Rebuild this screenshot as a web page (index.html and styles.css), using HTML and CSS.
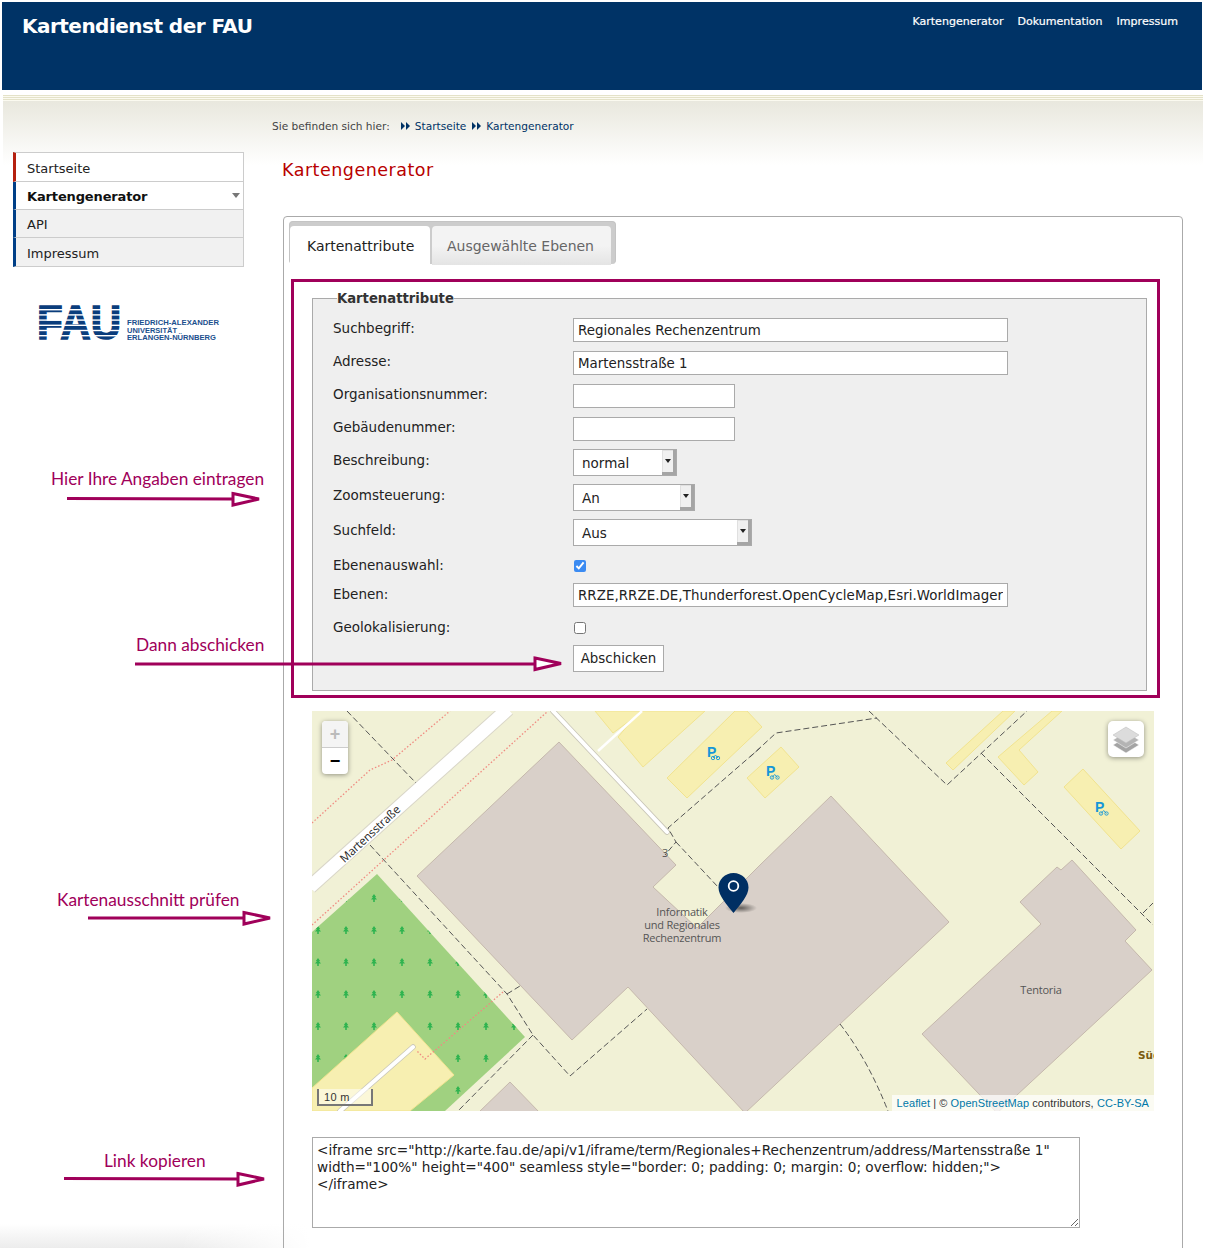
FILE: index.html
```html
<!DOCTYPE html>
<html lang="de">
<head>
<meta charset="utf-8">
<title>Kartendienst der FAU</title>
<link rel="stylesheet" href="styles.css">
</head>
<body>
<div class="page">
  <header class="site-header">
    <div class="site-title">Kartendienst der FAU</div>
    <nav class="top-nav">
      <a>Kartengenerator</a>
      <a>Dokumentation</a>
      <a>Impressum</a>
    </nav>
  </header>
  <div class="layout">
    <aside class="sidebar">
      <ul class="side-menu">
        <li class="item item-home">Startseite</li>
        <li class="item item-active">Kartengenerator<span class="caret"></span></li>
        <li class="item item-plain">API</li>
        <li class="item item-plain item-last">Impressum</li>
      </ul>
      <svg class="fau-logo" width="200" height="42" viewBox="-2 0 200 42">
        <text class="fau-big" transform="scale(1 1.16)" x="-1" y="30.200">FAU</text>
        <g class="fau-stripes">
          <rect x="-2" y="5" width="90" height="1.4"/>
          <rect x="-2" y="10.200" width="90" height="1.4"/>
          <rect x="-2" y="15.400" width="90" height="1.4"/>
          <rect x="-2" y="20.600" width="90" height="1.4"/>
          <rect x="-2" y="25.800" width="90" height="1.4"/>
          <rect x="-2" y="31" width="90" height="1.4"/>
        </g>
        <text class="fau-small" x="89" y="21" textLength="92" lengthAdjust="spacingAndGlyphs">FRIEDRICH-ALEXANDER</text>
        <text class="fau-small" x="89" y="28.500" textLength="50" lengthAdjust="spacingAndGlyphs">UNIVERSITÄT</text>
        <text class="fau-small" x="89" y="36" textLength="89" lengthAdjust="spacingAndGlyphs">ERLANGEN-NÜRNBERG</text>
      </svg>
    </aside>
    <main class="main">
      <div class="breadcrumb">
        <span class="crumb-label">Sie befinden sich hier:</span>
        <svg class="crumb-icon" width="9" height="8" viewBox="0 0 9 8"><path d="M0 0l4 4-4 4zM5 0l4 4-4 4z"/></svg>
        <a>Startseite</a>
        <svg class="crumb-icon" width="9" height="8" viewBox="0 0 9 8"><path d="M0 0l4 4-4 4zM5 0l4 4-4 4z"/></svg>
        <a>Kartengenerator</a>
      </div>
      <h1 class="page-title">Kartengenerator</h1>
      <section class="panel">
        <div class="tabs">
          <div class="tab tab-active">Kartenattribute</div>
          <div class="tab">Ausgewählte Ebenen</div>
        </div>
        <div class="frame">
          <form class="fieldset-form">
            <fieldset class="attrs">
              <legend>Kartenattribute</legend>
              <div class="grid">
                <label>Suchbegriff:</label>
                <input class="field wide" type="text" value="Regionales Rechenzentrum">
                <label>Adresse:</label>
                <input class="field wide" type="text" value="Martensstraße 1">
                <label>Organisationsnummer:</label>
                <input class="field short" type="text">
                <label>Gebäudenummer:</label>
                <input class="field short" type="text">
                <label>Beschreibung:</label>
                <div class="select sel-a"><span class="sel-text">normal</span><span class="sel-btn"></span></div>
                <label>Zoomsteuerung:</label>
                <div class="select sel-b"><span class="sel-text">An</span><span class="sel-btn"></span></div>
                <label>Suchfeld:</label>
                <div class="select sel-c"><span class="sel-text">Aus</span><span class="sel-btn"></span></div>
                <label>Ebenenauswahl:</label>
                <input class="check" type="checkbox" checked>
                <label>Ebenen:</label>
                <input class="field wide layers" type="text" value="RRZE,RRZE.DE,Thunderforest.OpenCycleMap,Esri.WorldImagery">
                <label>Geolokalisierung:</label>
                <input class="check" type="checkbox">
                <span></span>
                <button class="submit" type="button">Abschicken</button>
              </div>
            </fieldset>
          </form>
        </div>
        <div class="map">
          <svg class="map-svg" width="842" height="400" viewBox="312 711 842 400">
            <defs>
              <pattern id="trees" patternUnits="userSpaceOnUse" x="304" y="882" width="28" height="32">
                <path class="tree" d="M14 12l2.2 3h-1.2l2 2.6h-2.2v2.4h-1.6v-2.4h-2.2l2-2.6h-1.2z"/>
              </pattern>
              <radialGradient id="shadow">
                <stop offset="0" stop-color="#000" stop-opacity=".55"/>
                <stop offset="1" stop-color="#000" stop-opacity="0"/>
              </radialGradient>
            </defs>
            <rect class="land" x="312" y="711" width="842" height="400"/>
            <polygon class="green" points="312,932 377,874 525,1037 445,1111 312,1111"/>
            <polygon class="trees" points="312,932 377,874 525,1037 445,1111 312,1111"/>
            <polygon class="park" points="397,1012 454,1075 410,1111 312,1111 312,1088"/>
            <polygon class="park" points="595,711 643,711 613,733"/>
            <polygon class="park" points="640,711 705,711 643,767 618,737"/>
            <polygon class="park" points="667,778 687,798 762,727 747,711 735,711"/>
            <polygon class="park" points="781,747 799,767 765,798 747,778"/>
            <polygon class="park" points="1003,711 1015,711 953,770 946,763"/>
            <polygon class="park" points="1052,711 1062,711 1019,750 1038,772 1024,785 998,757"/>
            <polygon class="park" points="1083,769 1140,831 1121,849 1064,787"/>
            <polygon class="building" points="559,742 676,865 653,887 697,928 760,865 831,796 949,922 745,1113 628,987 572,1040 417,876"/>
            <polygon class="building" points="1072,860 1136,930 1125,941 1152,970 1017,1095 997,1113 922,1034 1041,924 1020,902 1057,867 1061,870"/>
            <polygon class="building" points="510,1082 540,1113 478,1113"/>
            <line class="road-edge" x1="508" y1="709" x2="310" y2="887"/>
            <line class="road" x1="508" y1="709" x2="310" y2="887"/>
            <line class="lane-edge" x1="553" y1="711" x2="667" y2="832"/>
            <line class="lane" x1="553" y1="711" x2="667" y2="832"/>
            <line class="lane-thin" x1="642" y1="711" x2="598" y2="751"/>
            <line class="lane-edge" x1="413" y1="1047" x2="340" y2="1111"/>
            <line class="lane" x1="413" y1="1047" x2="340" y2="1111"/>
            <polyline class="footway" points="312,823 370,770 392,760 450,711"/>
            <line class="footway" x1="312" y1="925" x2="548" y2="711"/>
            <polyline class="footway" points="503,992 425,1059 416,1050"/>
            <polyline class="fence" points="347,711 416,783"/>
            <polyline class="fence" points="370,845 507,994 533,1035 570,1076 647,1009"/>
            <line class="fence" x1="507" y1="994" x2="520" y2="986"/>
            <line class="fence" x1="533" y1="1035" x2="458" y2="1111"/>
            <polyline class="fence" points="760,748 668,828 676,842 665,855"/>
            <line class="fence" x1="676" y1="842" x2="718" y2="887"/>
            <polyline class="fence" points="750,757 776,733 877,718"/>
            <polyline class="fence" points="869,711 947,785 1027,711"/>
            <line class="fence" x1="981" y1="753" x2="1153" y2="925"/>
            <line class="fence" x1="1143" y1="913" x2="1153" y2="903"/>
            <path class="fence" d="M840 1024Q868 1060 888 1111"/>
            <g class="bike">
              <text class="bike-p" x="707" y="757">P</text>
              <circle cx="713" cy="758" r="1.700"/><circle cx="718" cy="758" r="1.700"/>
              <path d="M713 758l2.500-3 2.500 3"/>
              <text class="bike-p" x="766" y="776">P</text>
              <circle cx="772" cy="777.500" r="1.700"/><circle cx="777.500" cy="777.500" r="1.700"/>
              <path d="M772 777.500l2.700-3 2.800 3"/>
              <text class="bike-p" x="1095" y="812">P</text>
              <circle cx="1101" cy="813.500" r="1.700"/><circle cx="1106.500" cy="813.500" r="1.700"/>
              <path d="M1101 813.500l2.700-3 2.800 3"/>
            </g>
            <text class="map-label" x="665" y="857">3</text>
            <text class="map-label" x="682" y="916">Informatik</text>
            <text class="map-label" x="682" y="929">und Regionales</text>
            <text class="map-label" x="682" y="942">Rechenzentrum</text>
            <text class="map-label" x="1041" y="994">Tentoria</text>
            <text class="map-suburb" x="1138" y="1059">Süd</text>
            <text class="street" transform="translate(370 834) rotate(-43)" x="0" y="4">Martensstraße</text>
            <ellipse cx="741" cy="908" rx="16" ry="5" fill="url(#shadow)"/>
            <path class="pin" d="M733.500 873c8.500 0 15 6.500 15 14.500 0 8-8 17-15 25.500-7-8.500-15-17.500-15-25.500 0-8 6.500-14.500 15-14.500z"/>
            <circle class="pin-ring" cx="733.500" cy="886" r="4.800"/>
          </svg>
          <div class="zoom-ctl">
            <div class="zoom-btn zoom-off">+</div>
            <div class="zoom-btn">&#8722;</div>
          </div>
          <div class="layer-ctl">
            <svg width="30" height="30" viewBox="0 0 30 30">
              <path class="lay3" d="M15 13l13 8-13 8-13-8z"/>
              <path class="lay2" d="M15 8l13 8-13 8-13-8z"/>
              <path class="lay1" d="M15 3l13 8-13 8-13-8z"/>
            </svg>
          </div>
          <div class="scale">10 m</div>
          <div class="attrib"><a>Leaflet</a> | © <a>OpenStreetMap</a> contributors, <a>CC-BY-SA</a></div>
        </div>
        <div class="code-wrap">
          <textarea class="code" spellcheck="false">&lt;iframe src="http://karte.fau.de/api/v1/iframe/term/Regionales+Rechenzentrum/address/Martensstraße 1" width="100%" height="400" seamless style="border: 0; padding: 0; margin: 0; overflow: hidden;"&gt;
&lt;/iframe&gt;</textarea>
        </div>
      </section>
    </main>
  </div>
  <svg class="notes" width="1209" height="1248" viewBox="0 0 1209 1248">
    <text class="note" x="51" y="485">Hier Ihre Angaben eintragen</text>
    <line class="note-line" x1="67" y1="498.500" x2="234" y2="499"/>
    <path class="note-head" d="M233 493.500l26 5.500-26 6z"/>
    <text class="note" x="136" y="651">Dann abschicken</text>
    <line class="note-line" x1="135" y1="664" x2="536" y2="664"/>
    <path class="note-head" d="M535 658l26 5.500-26 6z"/>
    <text class="note" x="57" y="906">Kartenausschnitt prüfen</text>
    <line class="note-line" x1="88" y1="918" x2="245" y2="918"/>
    <path class="note-head" d="M244 912.500l26 5.500-26 6z"/>
    <text class="note" x="104" y="1167">Link kopieren</text>
    <line class="note-line" x1="64" y1="1178.500" x2="239" y2="1179"/>
    <path class="note-head" d="M238 1173.500l26 5.500-26 6z"/>
  </svg>
</div>
</body>
</html>
```
FILE: styles.css
```css
* { box-sizing: border-box; }
html, body { margin: 0; padding: 0; background: #fff; }
body { font-family: "DejaVu Sans", Verdana, sans-serif; color: #222; }

.page {
  position: relative;
  width: 1209px;
  height: 1248px;
  overflow: hidden;
  padding-top: 2px;
  background:
    linear-gradient(to right, rgba(255, 255, 255, 0) 180px, #fff 310px) no-repeat left bottom / 320px 24px,
    linear-gradient(to top, #ececec, #fff) no-repeat left bottom / 320px 24px;
}

.site-header {
  display: flex;
  justify-content: space-between;
  height: 88px;
  margin: 0 7px 0 2px;
  padding: 13px 24px 0 20px;
  background: #003366;
  color: #fff;
}
.site-title { font-size: 20px; font-weight: 700; line-height: 23px; letter-spacing: -.52px; }
.top-nav { display: flex; gap: 14px; font-size: 11.050px; line-height: 13px; }
.top-nav a { color: #fff; -webkit-text-stroke: .2px #fff; }

.layout {
  display: grid;
  grid-template-columns: 272px 911px;
  height: 1158px;
  background:
    linear-gradient(to bottom,
      #fff 0 5px, #e4e2c8 5px 6px, #fbfaf0 6px 7px, #e4e2c8 7px 8px, #fbfaf0 8px 9px,
      #e4e2c8 9px 10px, #fbfaf0 10px 11px, #e9e8de 11px 12px, #fff 75px) no-repeat 3px 0 / 1200px 76px;
}

.sidebar { padding: 62px 0 0 13px; }
.side-menu {
  list-style: none;
  width: 231px;
  margin: 0;
  padding: 0;
  font-size: 13px;
}
.item {
  position: relative;
  height: 28px;
  padding-left: 11px;
  line-height: 28px;
  border: 1px solid #ccc;
  border-left: 3px solid #003f87;
  border-top: 0;
  background: #fff;
}
.item-home { border-left-color: #b5200f; border-top: 1px solid #ccc; height: 30px; line-height: 31px; }
.item-active { font-weight: 700; color: #111; letter-spacing: -.14px; line-height: 29px; }
.item-plain { background: #f1f1f1; line-height: 29px; }
.item-last { height: 29px; line-height: 31px; }
.caret {
  position: absolute;
  right: 3px;
  top: 11px;
  border: 4px solid transparent;
  border-top: 5px solid #777;
  border-bottom: 0;
}

.fau-logo { display: block; margin: 37px 0 0 23px; }
.fau-big {
  font-family: "Liberation Sans", sans-serif;
  font-weight: 700;
  font-size: 42px;
  fill: #0a3d7c;
  stroke: #0a3d7c;
  stroke-width: 1.4px;
}
.fau-stripes { fill: #fff; }
.fau-small { font-family: "Liberation Sans", sans-serif; font-weight: 700; font-size: 7.500px; fill: #1b4f8d; }

.breadcrumb {
  display: flex;
  align-items: center;
  height: 16px;
  margin-top: 28px;
  font-size: 10.600px;
  color: #444;
}
.breadcrumb a { color: #003366; }
.crumb-label { margin-right: 11px; }
.crumb-icon { fill: #003366; margin-right: 5px; }
.breadcrumb a + .crumb-icon { margin-left: 6px; }

.page-title {
  margin: 26px 0 0 10px;
  font-size: 17.500px;
  font-weight: 400;
  line-height: 20px;
  letter-spacing: .5px;
  color: #b80000;
}

.panel {
  height: 1100px;
  margin: 36px 0 0 11px;
  padding: 4px 0 0 5px;
  border: 1px solid #aaa;
  border-radius: 4px 4px 0 0;
}

.tabs {
  display: flex;
  gap: 2px;
  width: 327px;
  height: 43px;
  padding: 4px 5px 0 0;
  background: #ccc;
  border: 1px solid #c4c4c4;
  border-bottom: 0;
  border-radius: 4px;
}
.tab {
  height: 39px;
  padding: 0 15px;
  font-size: 14px;
  line-height: 40px;
  white-space: nowrap;
  color: #666;
  border-radius: 4px 4px 0 0;
  background: linear-gradient(to bottom, #f3f3f3 0 50%, #e4e4e4 100%);
}
.tab-active { color: #222; background: #fff; flex: 0 0 140px; padding-left: 17px; }
.tab:not(.tab-active) { flex: 0 0 179px; letter-spacing: -.02px; }

.frame {
  width: 869px;
  height: 419px;
  margin: 15px 0 0 2px;
  padding: 8px 10px 4px 18px;
  border: 3px solid #a0005a;
}
.attrs {
  height: 401px;
  margin: 0;
  padding: 11px 0 0 20px;
  border: 1px solid #aaa;
  background: #efefef;
}
.attrs legend {
  margin-left: 4px;
  padding: 0;
  font-size: 13.200px;
  font-weight: 700;
  line-height: 17px;
  color: #333;
}
.grid {
  display: grid;
  grid-template-columns: 240px 1fr;
  grid-template-rows: 33px 33px 33px 32px 35px 35px 35px 29px 33px 29px 27px;
  align-items: start;
  font-size: 13.500px;
}
.grid label { line-height: 21px; color: #222; }
.grid label:nth-of-type(n+5) { line-height: 23px; }
.field {
  display: block;
  height: 24px;
  padding: 1px 4px 0;
  font: 13.400px "DejaVu Sans", Verdana, sans-serif;
  color: #222;
  background: #fff;
  border: 1px solid #aaa;
  border-radius: 0;
  outline: 0;
}
.layers { letter-spacing: .05px; }
.wide { width: 435px; }
.short { width: 162px; }
.select {
  display: flex;
  height: 27px;
  background: #fff;
  border: 1px solid #aaa;
  font-size: 13.500px;
  line-height: 27px;
}
.sel-a { width: 104px; }
.sel-b { width: 122px; }
.sel-c { width: 179px; }
.sel-text { flex: 1; padding-left: 8px; }
.sel-btn {
  position: relative;
  flex: 0 0 14px;
  height: 25px;
  background: #f0f0f0;
  box-shadow: inset -3px -3px 0 #a5a5a5, inset 1px 1px 0 #e0e0e0;
}
.sel-btn::after {
  content: "";
  position: absolute;
  left: 3px;
  top: 9px;
  border: 3px solid transparent;
  border-top: 4px solid #222;
  border-bottom: 0;
}
.check { width: 12px; height: 12px; margin: 6px 0 0 1px; accent-color: #3b8bf2; }
.submit {
  width: 91px;
  height: 27px;
  padding: 0;
  font: 13.400px "DejaVu Sans", Verdana, sans-serif;
  color: #222;
  background: #fff;
  border: 1px solid #aaa;
  border-radius: 0;
}

.map {
  position: relative;
  width: 842px;
  height: 400px;
  margin: 13px 0 0 23px;
  overflow: hidden;
}
.map-svg { display: block; }
.land { fill: #f1f1d6; }
.green { fill: #a0d180; }
.trees { fill: url(#trees); }
.tree { fill: #2fb44f; }
.park { fill: #f7efb1; stroke: #f1e38f; stroke-width: 1; }
.building { fill: #d9d0c9; stroke: #c5b8ac; stroke-width: 1; }
.road { stroke: #fff; stroke-width: 13; }
.road-edge { stroke: #d9d6c8; stroke-width: 15; }
.lane { stroke: #fff; stroke-width: 4; stroke-linecap: round; }
.lane-edge { stroke: #c9c6b8; stroke-width: 5.500; stroke-linecap: round; }
.lane-thin { stroke: #fff; stroke-width: 2.500; }
.footway { fill: none; stroke: #f08a80; stroke-width: 1.300; stroke-dasharray: 1.500 2; }
.fence { fill: none; stroke: #555; stroke-width: 1; stroke-dasharray: 6 3; }
.bike { fill: none; stroke: #1596d8; stroke-width: .9; }
.bike-p { font: 700 14px "Liberation Sans", sans-serif; fill: #1596d8; stroke: none; }
.map-label { font: 11px "Open Sans", sans-serif; fill: #555; text-anchor: middle; letter-spacing: -.2px; }
.map-suburb { font: 700 10.500px "DejaVu Sans", sans-serif; fill: #7a5a10; }
.street { font: 11.500px "Open Sans", sans-serif; fill: #222; stroke: #fff; stroke-width: 2.500px; paint-order: stroke; text-anchor: middle; letter-spacing: -.1px; }
.pin { fill: #002f63; }
.pin-ring { fill: none; stroke: #fff; stroke-width: 1.800; }

.zoom-ctl {
  position: absolute;
  left: 10px;
  top: 10px;
  width: 26px;
  height: 53px;
  border-radius: 4px;
  background: #fff;
  box-shadow: 0 1px 5px rgba(0, 0, 0, .4);
  overflow: hidden;
}
.zoom-btn {
  height: 26.500px;
  text-align: center;
  font: 700 18px/26px "Liberation Sans", sans-serif;
  color: #000;
}
.zoom-off { color: #bbb; background: #f4f4f4; border-bottom: 1px solid #ccc; }
.layer-ctl {
  position: absolute;
  right: 10px;
  top: 10px;
  display: flex;
  align-items: center;
  justify-content: center;
  width: 36px;
  height: 36px;
  border-radius: 5px;
  background: #fff;
  box-shadow: 0 1px 5px rgba(0, 0, 0, .4);
}
.lay1 { fill: #dcdcdc; stroke: #bbb; stroke-width: .5; }
.lay2 { fill: #b4b4b4; stroke: #fff; stroke-width: .5; }
.lay3 { fill: #a4a4a4; stroke: #fff; stroke-width: .5; }
.scale {
  position: absolute;
  left: 5px;
  bottom: 5px;
  width: 56px;
  height: 17px;
  padding-left: 5px;
  font: 11px/16px "Liberation Sans", sans-serif;
  letter-spacing: .3px;
  color: #333;
  background: rgba(255, 255, 255, .5);
  border: 2px solid #777;
  border-top: 0;
}
.attrib {
  position: absolute;
  right: 0;
  bottom: 0;
  height: 16px;
  padding: 0 5px;
  font: 11px/16px "Liberation Sans", sans-serif;
  letter-spacing: .07px;
  color: #333;
  background: rgba(255, 255, 255, .7);
}
.attrib a { color: #0078a8; }

.code-wrap { margin: 26px 0 0 23px; }
.code {
  display: block;
  width: 768px;
  height: 91px;
  padding: 4px;
  font: 13.630px/17px "DejaVu Sans", sans-serif;
  color: #222;
  border: 1px solid #aaa;
  border-radius: 0;
  outline: 0;
  background: #fff;
}

.notes { position: absolute; left: 0; top: 0; pointer-events: none; }
.note { font: 17.300px Lato, sans-serif; fill: #a0005a; }
.note-line { stroke: #a0005a; stroke-width: 3; }
.note-head { fill: #fff; stroke: #a0005a; stroke-width: 3; }
```
